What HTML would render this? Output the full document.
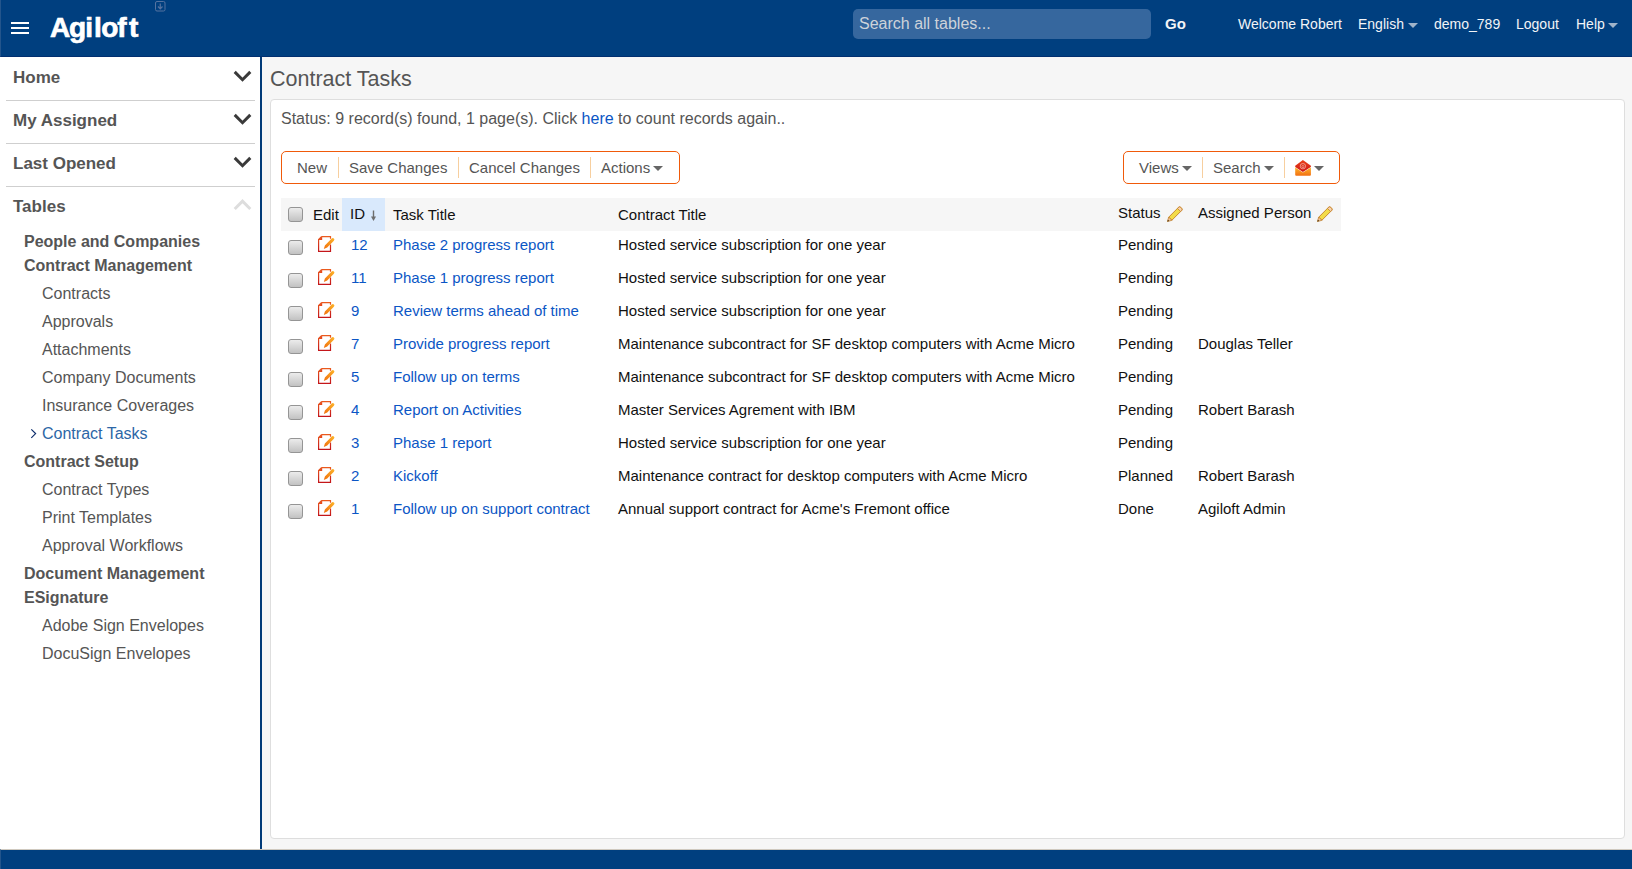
<!DOCTYPE html>
<html><head><meta charset="utf-8"><title>Contract Tasks</title>
<style>
*{box-sizing:border-box;margin:0;padding:0}
html,body{width:1632px;height:869px;overflow:hidden;background:#fff;font-family:"Liberation Sans",sans-serif}
.a{position:absolute;white-space:nowrap;line-height:20px}
#hdr{position:absolute;left:0;top:0;width:1632px;height:57px;background:#003f7f;border-bottom:1px solid #012f70;border-left:1px solid #23558c}
#side{position:absolute;left:0;top:57px;width:260px;height:792px;background:#fff}
#vline{position:absolute;left:260px;top:57px;width:2px;height:792px;background:#013a78}
#main{position:absolute;left:262px;top:57px;width:1370px;height:792px;background:#f6f6f6}
#foot{position:absolute;left:0;top:849px;width:1632px;height:20px;background:#003f7f;border-top:1px solid #cfc9bf;border-left:1px solid #23558c}
.hb{position:absolute;left:11px;width:18px;height:2px;background:#fff}
.logo{font-size:28px;font-weight:bold;color:#fff;-webkit-text-stroke:0.7px #fff}
.search{position:absolute;left:853px;top:9px;width:298px;height:30px;background:#36679e;border-radius:5px}
.ph{font-size:16px;color:#cdd3da}
.hw{font-size:14px;color:#f2f4f7}
.caretw{position:absolute;width:0;height:0;border-left:5px solid transparent;border-right:5px solid transparent;border-top:5px solid #9fb3c9}
.sh{font-size:17px;font-weight:bold;color:#555}
.sep{position:absolute;left:6px;width:249px;height:1px;background:#cfcfcf}
.cat{font-size:16px;font-weight:bold;color:#555}
.it{font-size:16px;color:#555}
.chev{position:absolute;left:233px;width:19px;height:12px;overflow:visible}
.title{font-size:21.5px;color:#555}
#panel{position:absolute;left:270px;top:99px;width:1355px;height:740px;background:#fff;border:1px solid #dedede;border-radius:4px}
.st{font-size:16px;color:#555}
.lnk{color:#0b56c5}
.tb{position:absolute;top:151px;height:33px;border:1px solid #f05a0a;border-radius:5px}
.tbt{font-size:15px;color:#555}
.tsep{position:absolute;top:157px;width:1px;height:21px;background:#f7cf9f}
.caretg{position:absolute;width:0;height:0;border-left:5px solid transparent;border-right:5px solid transparent;border-top:5px solid #666}
#th{position:absolute;left:281px;top:198px;width:1060px;height:33px;background:#f6f6f6}
#thid{position:absolute;left:342px;top:198px;width:43px;height:33px;background:#d9e9fc}
.cb{position:absolute;width:15px;height:15px;border:1px solid #959595;border-radius:3px;background:linear-gradient(#ececec,#c2c2c2)}
.tht{font-size:15px;color:#111}
.td{font-size:15px;color:#111}
.tdl{font-size:15px;color:#0b56c5}
</style></head><body>
<div id="hdr"></div><div id="side"></div><div id="main"></div><div id="vline"></div><div id="foot"></div>
<div class="hb" style="top:22px"></div>
<div class="hb" style="top:27px"></div>
<div class="hb" style="top:32px"></div>
<div class="a logo" style="left:50.1px;top:8.3px;line-height:40px">A</div>
<div class="a logo" style="left:69.1px;top:8.3px;line-height:40px">g</div>
<div class="a logo" style="left:85.3px;top:8.3px;line-height:40px">i</div>
<div class="a logo" style="left:93.9px;top:8.3px;line-height:40px">l</div>
<div class="a logo" style="left:101.3px;top:8.3px;line-height:40px">o</div>
<div class="a logo" style="left:117.2px;top:8.3px;line-height:40px">f</div>
<div class="a logo" style="left:128.9px;top:8.3px;line-height:40px">t</div>
<svg style="position:absolute;left:154px;top:0px" width="13" height="13" viewBox="0 0 13 13"><rect x="1.5" y="1.5" width="9.5" height="9.5" rx="1.5" fill="none" stroke="#5573a0" stroke-width="1"/><path d="M6.25 3.5 L6.25 8.5 M4 6.5 L6.25 8.8 L8.5 6.5" fill="none" stroke="#5573a0" stroke-width="1.2"/></svg>
<div class="search"></div>
<div class="a ph" style="left:859px;top:14px">Search all tables...</div>
<div class="a hw" style="left:1165px;top:14px;font-weight:bold;font-size:15px">Go</div>
<div class="a hw" style="left:1238px;top:14px">Welcome Robert</div>
<div class="a hw" style="left:1358px;top:14px">English</div>
<div class="a hw" style="left:1434px;top:14px">demo_789</div>
<div class="a hw" style="left:1516px;top:14px">Logout</div>
<div class="a hw" style="left:1576px;top:14px">Help</div>
<div class="caretw" style="left:1408px;top:23px"></div><div class="caretw" style="left:1608px;top:23px"></div>
<div class="a sh" style="left:13px;top:68px">Home</div>
<div class="sep" style="top:100px"></div>
<svg class="chev" style="top:70px" viewBox="0 0 19 12"><path d="M1.7 1.9 L9.5 9.7 L17.3 1.9" fill="none" stroke="#3a3a3a" stroke-width="3"/></svg>
<div class="a sh" style="left:13px;top:111px">My Assigned</div>
<div class="sep" style="top:143px"></div>
<svg class="chev" style="top:113px" viewBox="0 0 19 12"><path d="M1.7 1.9 L9.5 9.7 L17.3 1.9" fill="none" stroke="#3a3a3a" stroke-width="3"/></svg>
<div class="a sh" style="left:13px;top:154px">Last Opened</div>
<div class="sep" style="top:186px"></div>
<svg class="chev" style="top:156px" viewBox="0 0 19 12"><path d="M1.7 1.9 L9.5 9.7 L17.3 1.9" fill="none" stroke="#3a3a3a" stroke-width="3"/></svg>
<div class="a sh" style="left:13px;top:197px">Tables</div>
<svg class="chev" style="top:199px" viewBox="0 0 19 12"><path d="M1.7 10 L9.5 2.2 L17.3 10" fill="none" stroke="#ddd" stroke-width="3"/></svg>
<div class="a cat" style="left:24px;top:232px">People and Companies</div>
<div class="a cat" style="left:24px;top:256px">Contract Management</div>
<div class="a it" style="left:42px;top:284px">Contracts</div>
<div class="a it" style="left:42px;top:312px">Approvals</div>
<div class="a it" style="left:42px;top:340px">Attachments</div>
<div class="a it" style="left:42px;top:368px">Company Documents</div>
<div class="a it" style="left:42px;top:396px">Insurance Coverages</div>
<div class="a it" style="left:42px;top:424px;color:#2c66a6">Contract Tasks</div>
<svg style="position:absolute;left:29px;top:428px" width="8" height="12" viewBox="0 0 8 12"><path d="M2.3 1.3 L6.6 5.6 L2.3 9.9" fill="none" stroke="#0c2d6c" stroke-width="1.2"/></svg>
<div class="a cat" style="left:24px;top:452px">Contract Setup</div>
<div class="a it" style="left:42px;top:480px">Contract Types</div>
<div class="a it" style="left:42px;top:508px">Print Templates</div>
<div class="a it" style="left:42px;top:536px">Approval Workflows</div>
<div class="a cat" style="left:24px;top:564px">Document Management</div>
<div class="a cat" style="left:24px;top:588px">ESignature</div>
<div class="a it" style="left:42px;top:616px">Adobe Sign Envelopes</div>
<div class="a it" style="left:42px;top:644px">DocuSign Envelopes</div>
<div class="a title" style="left:270px;top:69px">Contract Tasks</div>
<div id="panel"></div>
<div class="a st" style="left:281px;top:109px">Status: 9 record(s) found, 1 page(s). Click <span class="lnk">here</span> to count records again..</div>
<div class="tb" style="left:281px;width:399px"></div>
<div class="tb" style="left:1123px;width:217px"></div>
<div class="a tbt" style="left:297px;top:157.5px">New</div>
<div class="a tbt" style="left:349px;top:157.5px">Save Changes</div>
<div class="a tbt" style="left:469px;top:157.5px">Cancel Changes</div>
<div class="a tbt" style="left:601px;top:157.5px">Actions</div>
<div class="a tbt" style="left:1139px;top:157.5px">Views</div>
<div class="a tbt" style="left:1213px;top:157.5px">Search</div>
<div class="tsep" style="left:338px"></div>
<div class="tsep" style="left:458px"></div>
<div class="tsep" style="left:590px"></div>
<div class="tsep" style="left:1202px"></div>
<div class="tsep" style="left:1284px"></div>
<div class="caretg" style="left:653px;top:166px"></div>
<div class="caretg" style="left:1182px;top:166px"></div>
<div class="caretg" style="left:1264px;top:166px"></div>
<div class="caretg" style="left:1314px;top:166px"></div>
<svg style="position:absolute;left:1290px;top:155px" width="25" height="25" viewBox="0 0 25 25">
<defs><linearGradient id="gmo" x1="0" y1="0" x2="0" y2="1"><stop offset="0" stop-color="#fdb42b"/><stop offset="1" stop-color="#f27012"/></linearGradient>
<linearGradient id="gmr" x1="0" y1="0" x2="0" y2="1"><stop offset="0" stop-color="#ea4318"/><stop offset="1" stop-color="#cf1717"/></linearGradient></defs>
<path d="M5.2 10.8 L12.9 4.9 L20.9 10.8 L20.9 12 L12.9 17 L5.2 12 Z" fill="url(#gmr)"/>
<path d="M5.2 12.4 L12.9 17.6 L20.9 12.4 L20.9 19.8 Q20.9 20.7 20 20.7 L6.1 20.7 Q5.2 20.7 5.2 19.8 Z" fill="url(#gmo)"/>
<circle cx="12.9" cy="11.2" r="2.7" fill="none" stroke="#f6c0b0" stroke-width="0.7"/>
<circle cx="12.9" cy="11.6" r="1.1" fill="none" stroke="#f6c0b0" stroke-width="0.6"/>
</svg>
<div id="th"></div><div id="thid"></div>
<div class="cb" style="left:288px;top:207px"></div>
<div class="a tht" style="left:313px;top:204.5px">Edit</div>
<div class="a tht" style="left:350px;top:203.5px">ID</div>
<div class="a tht" style="left:393px;top:204.5px">Task Title</div>
<div class="a tht" style="left:618px;top:204.5px">Contract Title</div>
<div class="a tht" style="left:1118px;top:203px">Status</div>
<div class="a tht" style="left:1198px;top:203px">Assigned Person</div>
<svg style="position:absolute;left:370px;top:210px" width="8" height="12" viewBox="0 0 8 12"><path d="M3.5 0.5 L3.5 8" stroke="#6d6d6d" stroke-width="1.4"/><path d="M1 6.5 L3.5 11 L6 6.5Z" fill="#6d6d6d"/></svg>
<svg style="position:absolute;left:1167px;top:206.3px" width="16" height="16" viewBox="0 0 16 16">
<path d="M4.83 14.29 L14.86 4.26 Q15.5 3.2 14.5 2.1 L13.8 1.4 Q12.8 0.5 11.74 1.14 L1.71 11.17 Z" fill="#f2dc48" stroke="#c47f22" stroke-width="0.9" stroke-linejoin="round"/>
<path d="M13.59 5.53 L14.86 4.26 Q15.5 3.2 14.5 2.1 L13.8 1.4 Q12.8 0.5 11.74 1.14 L10.47 2.41 Z" fill="#f7d2b2" stroke="#c47f22" stroke-width="0.8" stroke-linejoin="round"/>
<path d="M0.4 15.6 L4.83 14.29 L1.71 11.17 Z" fill="#f3c79c" stroke="#b8741c" stroke-width="0.7" stroke-linejoin="round"/>
<path d="M0.4 15.6 L2.2 15.1 L0.9 13.8 Z" fill="#3a2508"/>
</svg>
<svg style="position:absolute;left:1317px;top:206.3px" width="16" height="16" viewBox="0 0 16 16">
<path d="M4.83 14.29 L14.86 4.26 Q15.5 3.2 14.5 2.1 L13.8 1.4 Q12.8 0.5 11.74 1.14 L1.71 11.17 Z" fill="#f2dc48" stroke="#c47f22" stroke-width="0.9" stroke-linejoin="round"/>
<path d="M13.59 5.53 L14.86 4.26 Q15.5 3.2 14.5 2.1 L13.8 1.4 Q12.8 0.5 11.74 1.14 L10.47 2.41 Z" fill="#f7d2b2" stroke="#c47f22" stroke-width="0.8" stroke-linejoin="round"/>
<path d="M0.4 15.6 L4.83 14.29 L1.71 11.17 Z" fill="#f3c79c" stroke="#b8741c" stroke-width="0.7" stroke-linejoin="round"/>
<path d="M0.4 15.6 L2.2 15.1 L0.9 13.8 Z" fill="#3a2508"/>
</svg>
<svg width="0" height="0" style="position:absolute"><defs>
<linearGradient id="gdoc" x1="0" y1="0" x2="0" y2="1"><stop offset="0" stop-color="#ea5a1e"/><stop offset="1" stop-color="#c4161a"/></linearGradient>
<linearGradient id="gpen" x1="0" y1="1" x2="1" y2="0"><stop offset="0" stop-color="#f06e0c"/><stop offset="1" stop-color="#fdb52a"/></linearGradient>
</defs></svg>
<div class="cb" style="left:288px;top:240px"></div>
<svg style="position:absolute;left:314px;top:232px" width="24" height="24" viewBox="0 0 24 24">
<path d="M7.5 4.6 L16.5 4.6 L16.5 6.8 M16.5 12.6 L16.5 19.4 L4.6 19.4 L4.6 7.6 L7.5 4.6" fill="none" stroke="url(#gdoc)" stroke-width="1.2"/>
<path d="M4.4 8 L8.2 4.2 L8.2 8 Z" fill="#e64a1c"/>
<path d="M9.8 17.1 L10.9 13.4 L17.7 6.5 A1.5 1.5 0 0 1 19.9 8.7 L13.2 15.6 Z" fill="url(#gpen)"/>
</svg>
<div class="a tdl" style="left:351px;top:234.5px">12</div>
<div class="a tdl" style="left:393px;top:234.5px">Phase 2 progress report</div>
<div class="a td" style="left:618px;top:234.5px">Hosted service subscription for one year</div>
<div class="a td" style="left:1118px;top:234.5px">Pending</div>
<div class="cb" style="left:288px;top:273px"></div>
<svg style="position:absolute;left:314px;top:265px" width="24" height="24" viewBox="0 0 24 24">
<path d="M7.5 4.6 L16.5 4.6 L16.5 6.8 M16.5 12.6 L16.5 19.4 L4.6 19.4 L4.6 7.6 L7.5 4.6" fill="none" stroke="url(#gdoc)" stroke-width="1.2"/>
<path d="M4.4 8 L8.2 4.2 L8.2 8 Z" fill="#e64a1c"/>
<path d="M9.8 17.1 L10.9 13.4 L17.7 6.5 A1.5 1.5 0 0 1 19.9 8.7 L13.2 15.6 Z" fill="url(#gpen)"/>
</svg>
<div class="a tdl" style="left:351px;top:267.5px">11</div>
<div class="a tdl" style="left:393px;top:267.5px">Phase 1 progress report</div>
<div class="a td" style="left:618px;top:267.5px">Hosted service subscription for one year</div>
<div class="a td" style="left:1118px;top:267.5px">Pending</div>
<div class="cb" style="left:288px;top:306px"></div>
<svg style="position:absolute;left:314px;top:298px" width="24" height="24" viewBox="0 0 24 24">
<path d="M7.5 4.6 L16.5 4.6 L16.5 6.8 M16.5 12.6 L16.5 19.4 L4.6 19.4 L4.6 7.6 L7.5 4.6" fill="none" stroke="url(#gdoc)" stroke-width="1.2"/>
<path d="M4.4 8 L8.2 4.2 L8.2 8 Z" fill="#e64a1c"/>
<path d="M9.8 17.1 L10.9 13.4 L17.7 6.5 A1.5 1.5 0 0 1 19.9 8.7 L13.2 15.6 Z" fill="url(#gpen)"/>
</svg>
<div class="a tdl" style="left:351px;top:300.5px">9</div>
<div class="a tdl" style="left:393px;top:300.5px">Review terms ahead of time</div>
<div class="a td" style="left:618px;top:300.5px">Hosted service subscription for one year</div>
<div class="a td" style="left:1118px;top:300.5px">Pending</div>
<div class="cb" style="left:288px;top:339px"></div>
<svg style="position:absolute;left:314px;top:331px" width="24" height="24" viewBox="0 0 24 24">
<path d="M7.5 4.6 L16.5 4.6 L16.5 6.8 M16.5 12.6 L16.5 19.4 L4.6 19.4 L4.6 7.6 L7.5 4.6" fill="none" stroke="url(#gdoc)" stroke-width="1.2"/>
<path d="M4.4 8 L8.2 4.2 L8.2 8 Z" fill="#e64a1c"/>
<path d="M9.8 17.1 L10.9 13.4 L17.7 6.5 A1.5 1.5 0 0 1 19.9 8.7 L13.2 15.6 Z" fill="url(#gpen)"/>
</svg>
<div class="a tdl" style="left:351px;top:333.5px">7</div>
<div class="a tdl" style="left:393px;top:333.5px">Provide progress report</div>
<div class="a td" style="left:618px;top:333.5px">Maintenance subcontract for SF desktop computers with Acme Micro</div>
<div class="a td" style="left:1118px;top:333.5px">Pending</div>
<div class="a td" style="left:1198px;top:333.5px">Douglas Teller</div>
<div class="cb" style="left:288px;top:372px"></div>
<svg style="position:absolute;left:314px;top:364px" width="24" height="24" viewBox="0 0 24 24">
<path d="M7.5 4.6 L16.5 4.6 L16.5 6.8 M16.5 12.6 L16.5 19.4 L4.6 19.4 L4.6 7.6 L7.5 4.6" fill="none" stroke="url(#gdoc)" stroke-width="1.2"/>
<path d="M4.4 8 L8.2 4.2 L8.2 8 Z" fill="#e64a1c"/>
<path d="M9.8 17.1 L10.9 13.4 L17.7 6.5 A1.5 1.5 0 0 1 19.9 8.7 L13.2 15.6 Z" fill="url(#gpen)"/>
</svg>
<div class="a tdl" style="left:351px;top:366.5px">5</div>
<div class="a tdl" style="left:393px;top:366.5px">Follow up on terms</div>
<div class="a td" style="left:618px;top:366.5px">Maintenance subcontract for SF desktop computers with Acme Micro</div>
<div class="a td" style="left:1118px;top:366.5px">Pending</div>
<div class="cb" style="left:288px;top:405px"></div>
<svg style="position:absolute;left:314px;top:397px" width="24" height="24" viewBox="0 0 24 24">
<path d="M7.5 4.6 L16.5 4.6 L16.5 6.8 M16.5 12.6 L16.5 19.4 L4.6 19.4 L4.6 7.6 L7.5 4.6" fill="none" stroke="url(#gdoc)" stroke-width="1.2"/>
<path d="M4.4 8 L8.2 4.2 L8.2 8 Z" fill="#e64a1c"/>
<path d="M9.8 17.1 L10.9 13.4 L17.7 6.5 A1.5 1.5 0 0 1 19.9 8.7 L13.2 15.6 Z" fill="url(#gpen)"/>
</svg>
<div class="a tdl" style="left:351px;top:399.5px">4</div>
<div class="a tdl" style="left:393px;top:399.5px">Report on Activities</div>
<div class="a td" style="left:618px;top:399.5px">Master Services Agrement with IBM</div>
<div class="a td" style="left:1118px;top:399.5px">Pending</div>
<div class="a td" style="left:1198px;top:399.5px">Robert Barash</div>
<div class="cb" style="left:288px;top:438px"></div>
<svg style="position:absolute;left:314px;top:430px" width="24" height="24" viewBox="0 0 24 24">
<path d="M7.5 4.6 L16.5 4.6 L16.5 6.8 M16.5 12.6 L16.5 19.4 L4.6 19.4 L4.6 7.6 L7.5 4.6" fill="none" stroke="url(#gdoc)" stroke-width="1.2"/>
<path d="M4.4 8 L8.2 4.2 L8.2 8 Z" fill="#e64a1c"/>
<path d="M9.8 17.1 L10.9 13.4 L17.7 6.5 A1.5 1.5 0 0 1 19.9 8.7 L13.2 15.6 Z" fill="url(#gpen)"/>
</svg>
<div class="a tdl" style="left:351px;top:432.5px">3</div>
<div class="a tdl" style="left:393px;top:432.5px">Phase 1 report</div>
<div class="a td" style="left:618px;top:432.5px">Hosted service subscription for one year</div>
<div class="a td" style="left:1118px;top:432.5px">Pending</div>
<div class="cb" style="left:288px;top:471px"></div>
<svg style="position:absolute;left:314px;top:463px" width="24" height="24" viewBox="0 0 24 24">
<path d="M7.5 4.6 L16.5 4.6 L16.5 6.8 M16.5 12.6 L16.5 19.4 L4.6 19.4 L4.6 7.6 L7.5 4.6" fill="none" stroke="url(#gdoc)" stroke-width="1.2"/>
<path d="M4.4 8 L8.2 4.2 L8.2 8 Z" fill="#e64a1c"/>
<path d="M9.8 17.1 L10.9 13.4 L17.7 6.5 A1.5 1.5 0 0 1 19.9 8.7 L13.2 15.6 Z" fill="url(#gpen)"/>
</svg>
<div class="a tdl" style="left:351px;top:465.5px">2</div>
<div class="a tdl" style="left:393px;top:465.5px">Kickoff</div>
<div class="a td" style="left:618px;top:465.5px">Maintenance contract for desktop computers with Acme Micro</div>
<div class="a td" style="left:1118px;top:465.5px">Planned</div>
<div class="a td" style="left:1198px;top:465.5px">Robert Barash</div>
<div class="cb" style="left:288px;top:504px"></div>
<svg style="position:absolute;left:314px;top:496px" width="24" height="24" viewBox="0 0 24 24">
<path d="M7.5 4.6 L16.5 4.6 L16.5 6.8 M16.5 12.6 L16.5 19.4 L4.6 19.4 L4.6 7.6 L7.5 4.6" fill="none" stroke="url(#gdoc)" stroke-width="1.2"/>
<path d="M4.4 8 L8.2 4.2 L8.2 8 Z" fill="#e64a1c"/>
<path d="M9.8 17.1 L10.9 13.4 L17.7 6.5 A1.5 1.5 0 0 1 19.9 8.7 L13.2 15.6 Z" fill="url(#gpen)"/>
</svg>
<div class="a tdl" style="left:351px;top:498.5px">1</div>
<div class="a tdl" style="left:393px;top:498.5px">Follow up on support contract</div>
<div class="a td" style="left:618px;top:498.5px">Annual support contract for Acme's Fremont office</div>
<div class="a td" style="left:1118px;top:498.5px">Done</div>
<div class="a td" style="left:1198px;top:498.5px">Agiloft Admin</div>
</body></html>
